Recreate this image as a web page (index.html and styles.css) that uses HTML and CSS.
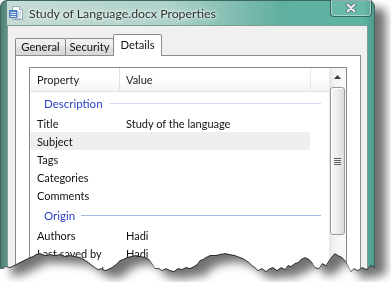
FILE: index.html
```html
<!DOCTYPE html>
<html lang="en">
<head>
    <meta charset="UTF-8">
    <title>Study of Language.docx Properties</title>
    <link rel="stylesheet" href="styles.css">
</head>
<body>
    <div class="sheet">
        <div class="torn">
            <div class="window">
                <div class="titlebar">
                    <svg class="doc-icon" width="16" height="16" viewBox="0 0 16 16">
                        <path d="M4.5 1.5h7l3 3v10h-10z" fill="#fff" stroke="#8d9cb0"/>
                        <path d="M11.5 1.5v3h3" fill="#e4eaf2" stroke="#8d9cb0"/>
                        <path d="M10 7h3M10 9h3M10 11h3M6 13.5h7" stroke="#a8bcdc"/>
                        <rect x="1" y="5" width="8.5" height="8" rx="1" fill="#3a6fc0"/>
                        <path d="M2.5 7.5h5.5M2.5 9.5h5.5M2.5 11.5h5.5" stroke="#dfe8f7"/>
                    </svg>
                    <span class="title">Study of Language.docx Properties</span>
                    <div class="close">
                        <svg width="12" height="10" viewBox="0 0 12 10">
                            <path d="M2.5 1.5l7 7M9.5 1.5l-7 7" stroke="#56776f" stroke-width="3.6" stroke-linecap="round"/>
                            <path d="M2.5 1.5l7 7M9.5 1.5l-7 7" stroke="#f2f2f2" stroke-width="1.8" stroke-linecap="round"/>
                        </svg>
                    </div>
                </div>

                <div class="client">
                    <div class="tabs">
                        <div class="tab tab-general">General</div>
                        <div class="tab tab-security">Security</div>
                        <div class="tab tab-details active">Details</div>
                    </div>

                    <div class="panel">
                        <div class="list">
                            <div class="list-main">
                                <div class="header">
                                    <div class="col-prop">Property</div>
                                    <div class="col-value">Value</div>
                                    <div class="col-rest"></div>
                                </div>

                                <div class="group faint"><span>Description</span></div>
                                <div class="row"><span class="prop">Title</span><span class="value">Study of the language</span></div>
                                <div class="row hover"><span class="prop">Subject</span><span class="value"></span></div>
                                <div class="row"><span class="prop">Tags</span><span class="value"></span></div>
                                <div class="row"><span class="prop">Categories</span><span class="value"></span></div>
                                <div class="row"><span class="prop">Comments</span><span class="value"></span></div>

                                <div class="group"><span>Origin</span></div>
                                <div class="row"><span class="prop">Authors</span><span class="value">Hadi</span></div>
                                <div class="row"><span class="prop">Last saved by</span><span class="value">Hadi</span></div>
                                <div class="row"><span class="prop">Revision number</span><span class="value">2</span></div>
                            </div>

                            <div class="scrollbar">
                                <div class="sb-up">
                                    <svg width="7" height="4" viewBox="0 0 7 4"><path d="M0 4L3.5 0 7 4z" fill="#3a3a3a"/></svg>
                                </div>
                                <div class="sb-thumb">
                                    <div class="grip"></div>
                                </div>
                            </div>
                        </div>
                    </div>
                </div>
            </div>
        </div>
    </div>
</body>
</html>
```

FILE: styles.css
```css
body { margin: 0; width: 391px; height: 282px; overflow: hidden; background: #fff; font-family: Lato, "Liberation Sans", sans-serif; color: #111; }

/* torn paper look round the whole screenshot */
.sheet { filter: drop-shadow(0 1px 0 rgba(0,0,0,0.6)) drop-shadow(11px 8px 5px rgba(0,0,0,0.55)); }
.torn {
    width: 391px; height: 282px; overflow: hidden;
    clip-path: polygon(0 0, 391px 0, 391px 262px, 387px 264px, 384px 262px, 380px 266px, 375px 267px, 371px 265px, 367px 269px, 362px 267px, 358px 270px, 354px 268px, 351px 271px, 348px 265px, 345px 260px, 342px 257px, 338px 255px, 335px 253px, 332px 256px, 329px 260px, 326px 265px, 322px 263px, 319px 268px, 315px 267px, 312px 262px, 309px 259px, 305px 257px, 301px 259px, 298px 262px, 295px 263px, 291px 266px, 288px 265px, 285px 269px, 281px 267px, 277px 270px, 273px 267px, 270px 268px, 266px 271px, 262px 268px, 258px 270px, 255px 267px, 252px 265px, 249px 262px, 246px 260px, 243px 258px, 240px 257px, 235px 255px, 230px 254px, 225px 253px, 220px 254px, 215px 255px, 210px 255px, 206px 257px, 203px 259px, 200px 260px, 197px 264px, 194px 266px, 190px 268px, 186px 267px, 182px 269px, 178px 268px, 174px 271px, 170px 270px, 166px 268px, 162px 270px, 159px 268px, 155px 268px, 152px 263px, 149px 259px, 145px 257px, 141px 256px, 138px 256px, 135px 255px, 131px 256px, 127px 257px, 123px 259px, 120px 260px, 116px 264px, 112px 267px, 108px 269px, 105px 270px, 101px 268px, 98px 269px, 95px 267px, 91px 264px, 87px 261px, 84px 259px, 80px 257px, 75px 256px, 70px 255px, 65px 256px, 60px 254px, 55px 255px, 50px 254px, 45px 255px, 40px 253px, 36px 254px, 33px 256px, 30px 257px, 26px 259px, 22px 261px, 18px 263px, 14px 265px, 10px 267px, 6px 266px, 3px 268px, 0 268px);
}

/* window frame */
.window {
    width: 375px; height: 300px; box-sizing: border-box;
    border: 1px solid #3b675f; border-bottom: none; border-radius: 7px 7px 0 0;
    padding: 0 6px;
    background: linear-gradient(90deg, #527f76 0%, #6aa498 3%, #64ab9d 50%, #5cb4a3 97%, #4e9c8d 100%);
    display: flex; flex-direction: column;
}
.titlebar {
    height: 24px; display: flex; align-items: center; margin-right: -4px;
    background: linear-gradient(90deg, rgba(230,240,236,0.75) 0%, rgba(220,236,231,0.6) 45%, rgba(255,255,255,0) 75%);
}
.doc-icon { margin-left: 1px; opacity: 0.85; flex: none; }
.title { margin-left: 5px; font-size: 12.3px; color: #2d3331; text-shadow: 0 0 6px #fff, 0 0 3px #fff; }
.close {
    margin-left: auto; align-self: flex-start; margin-top: -1px;
    width: 42px; height: 17px; box-sizing: border-box;
    border: 1px solid rgba(40,78,70,0.75); border-top: none; border-radius: 0 0 4px 4px;
    box-shadow: inset 0 0 0 1px rgba(255,255,255,0.4);
    background: rgba(255,255,255,0.08);
    display: flex; align-items: center; justify-content: center;
}

.client {
    flex: 1; background: #f0f0f0; border: 1px solid #7f9c96; border-bottom: none;
    padding: 8px 6px 0 7px; display: flex; flex-direction: column;
}

/* tabs */
.tabs { display: flex; align-items: flex-end; height: 21px; font-size: 11.2px; }
.tab {
    box-sizing: border-box; height: 17px; margin-left: -1px;
    border: 1px solid #898c95; border-bottom: none; border-radius: 2px 2px 0 0;
    background: linear-gradient(#f3f3f3, #ebebeb 45%, #dddddd 55%, #d8d8d8);
    display: flex; align-items: center; justify-content: center; padding-bottom: 1px;
}
.tab-general { width: 51px; margin-left: 0; }
.tab-security { width: 49px; }
.tab-details { width: 49px; }
.tab.active { height: 22px; margin-bottom: -1px; background: #fff; position: relative; z-index: 1; padding-bottom: 3px; }

.panel { flex: 1; background: #fff; border: 1px solid #898c95; border-bottom: none; padding: 11px 13px 0; }

/* details list */
.list { height: 230px; border: 1px solid #828790; border-bottom: none; display: flex; font-size: 11px; }
.list-main { flex: 1; }
.header { display: flex; height: 23px; border-bottom: 1px solid #e3e4e6; background: linear-gradient(#fff 0%, #fff 45%, #f3f4f6 100%); color: #222; }
.header div { display: flex; align-items: center; box-sizing: border-box; }
.col-prop { width: 90px; padding-left: 7px; border-right: 1px solid #e1e2e5; }
.col-value { width: 191px; padding-left: 6px; border-right: 1px solid #e8e9eb; }
.col-rest { flex: 1; }

.group { display: flex; align-items: center; height: 22px; padding-left: 14px; margin-right: 8px; color: #2b43c4; font-size: 11.5px; }
.group::after { content: ''; flex: 1; margin-left: 6px; border-top: 1px solid #a9b7e3; }
.group.faint::after { border-top-color: #d3dbee; }

.row { display: flex; align-items: center; height: 18px; width: 280px; }
.row.hover { background: #efefef; }
.prop { width: 96px; padding-left: 7px; box-sizing: border-box; flex: none; }

/* scrollbar */
.scrollbar { width: 17px; background: linear-gradient(90deg, #e6e6e6, #f4f4f4 35%, #fafafa); display: flex; flex-direction: column; }
.sb-up { height: 18px; display: flex; align-items: center; justify-content: center; }
.sb-thumb {
    margin: 1px 1px 0; height: 148px; box-sizing: border-box;
    border: 1px solid #9b9b9b; border-radius: 3px;
    background: linear-gradient(90deg, #f7f7f7, #ececec 50%, #dcdcdc);
    box-shadow: inset 1px 1px 0 #fff;
    display: flex; align-items: center; justify-content: center;
}
.grip { width: 7px; height: 7px; background: repeating-linear-gradient(#5c5c5c 0 1px, #f0f0f0 1px 2px); }
```
